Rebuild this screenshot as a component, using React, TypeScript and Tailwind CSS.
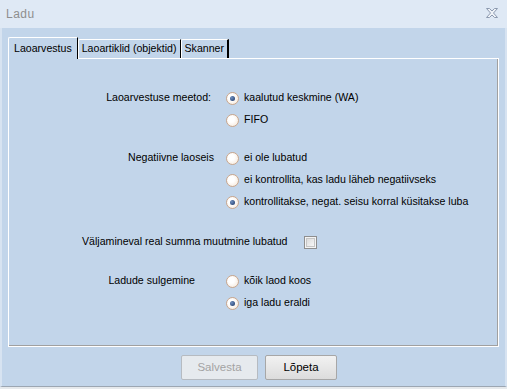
import React from 'react';

const Radio: React.FC<{ checked?: boolean }> = ({ checked }) => (
  <div className="w-[13px] h-[13px] rounded-full border border-[#c9a68c] bg-[radial-gradient(circle_at_40%_40%,#ffffff_30%,#f4e4d4)] flex items-center justify-center shrink-0">
    {checked && <div className="w-[5px] h-[5px] rounded-full bg-[radial-gradient(circle_at_35%_35%,#6f8fc0,#1a3563)]" />}
  </div>
);

const RadioRow: React.FC<{ label?: string; pr?: string; text: string; checked?: boolean }> = ({ label, pr = 'pr-[12px]', text, checked }) => (
  <div className="h-[22px] flex items-center">
    <div className={`w-[217px] text-right ${pr}`}>{label}</div>
    <Radio checked={checked} />
    <span className="ml-[5px]">{text}</span>
  </div>
);

export default function App() {
  return (
    <div
      className="w-[507px] h-[389px] bg-[#c2d5ea] flex flex-col text-[10.6px] text-black overflow-hidden"
      style={{ fontFamily: '"Liberation Sans", Arial, sans-serif' }}
    >
      {/* Title bar */}
      <div className="h-[28px] bg-[#dfe9f5] flex items-center justify-between pl-[6px] pr-[9px] shrink-0">
        <span className="text-[12px] text-[#8e8e8e] tracking-[0.5px]">Ladu</span>
        <svg width="12" height="10" viewBox="0 0 12 10" className="mt-[-3px]">
          <path d="M0.5 0.5h3l2.5 2.5 2.5-2.5h3l-4 4.5 4 4.5h-3l-2.5-2.5-2.5 2.5h-3l4-4.5z" fill="#eef2f7" stroke="#8d9ab0" strokeWidth="1" />
        </svg>
      </div>

      {/* Body */}
      <div className="flex-1 flex flex-col border-l-2 border-l-[#d7e3f1] border-r-2 border-r-[#d7e3f1] border-b border-b-[#9ca6b2]">
        {/* Tabs */}
        <div className="flex items-end h-[30px] pl-[6px] pt-[8px]">
          <div className="h-[22px] px-[5px] flex items-center bg-[#c2d5ea] border-t border-l border-white border-r border-r-black rounded-tl-[2px] relative z-10 -mb-px">
            Laoarvestus
          </div>
          <div className="h-[19px] px-[3px] flex items-center border-t border-l border-white border-r border-r-black rounded-tl-[2px]">
            Laoartiklid (objektid)
          </div>
          <div className="h-[19px] px-[3px] flex items-center border-t border-l border-white border-r border-r-black border-r-2 rounded-tl-[2px]">
            Skanner
          </div>
        </div>

        {/* Panel */}
        <div className="ml-[6px] w-[491px] h-[289px] border-t border-l border-white border-r border-b border-black shadow-[inset_-1px_-1px_0_#a0a0a0] pt-[28px]">
          <RadioRow label="Laoarvestuse meetod:" pr="pr-[15px]" text="kaalutud keskmine (WA)" checked />
          <RadioRow text="FIFO" />

          <div className="h-[16px]" />
          <RadioRow label="Negatiivne laoseis" pr="pr-[12px]" text="ei ole lubatud" />
          <RadioRow text="ei kontrollita, kas ladu läheb negatiivseks" />
          <RadioRow text="kontrollitakse, negat. seisu korral küsitakse luba" checked />

          <div className="h-[18px]" />
          <div className="h-[22px] flex items-center pl-[73px]">
            <span>Väljamineval real summa muutmine lubatud</span>
            <div className="ml-auto mr-[181px] w-[13px] h-[13px] border border-[#8e8e8e] bg-[#f4f4f4] p-px">
              <div className="w-full h-full border border-[#c6c6c6] bg-[linear-gradient(135deg,#dcdcdc,#f7f7f7)]" />
            </div>
          </div>

          <div className="h-[17px]" />
          <RadioRow label="Ladude sulgemine" pr="pr-[31px]" text="kõik laod koos" />
          <RadioRow text="iga ladu eraldi" checked />
        </div>

        {/* Buttons */}
        <div className="flex justify-center gap-[7px] pt-[8px] pl-[11px]">
          <button className="w-[77px] h-[25px] rounded-[2px] border border-[#b6bbc1] bg-[#e6eaee] text-[#a3a3a3] text-[11.5px]">
            Salvesta
          </button>
          <button className="w-[72px] h-[25px] rounded-[2px] border border-[#a7a7a7] bg-[linear-gradient(#f2f2f2,#dcdcdc)] text-black text-[11.5px]">
            Lõpeta
          </button>
        </div>
      </div>
      <div className="h-[2px] bg-[#e6e9ec] shrink-0" />
    </div>
  );
}
